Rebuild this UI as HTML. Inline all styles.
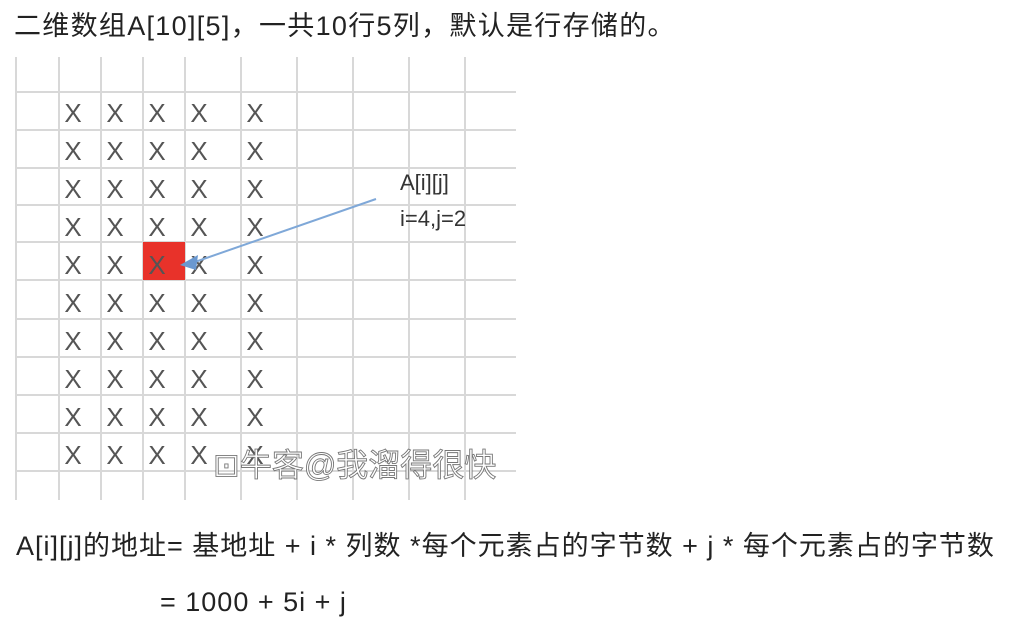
<!DOCTYPE html>
<html><head><meta charset="utf-8"><style>
body{margin:0;width:1020px;height:630px;background:#fff;overflow:hidden;position:relative;font-family:"Liberation Sans","Noto Sans CJK SC",sans-serif;color:#222}
.t{position:absolute;white-space:nowrap;font-size:27px;line-height:1}
svg{position:absolute;left:0;top:0}
</style></head><body>
<div class="t" style="left:14px;top:13px;letter-spacing:1.3px">二维数组A[10][5]，一共10行5列，默认是行存储的。</div>
<svg width="1020" height="630">
<g stroke="#d8d8d8" stroke-width="2">
<line x1="16" y1="57" x2="16" y2="500"/>
<line x1="59" y1="57" x2="59" y2="500"/>
<line x1="101" y1="57" x2="101" y2="500"/>
<line x1="143" y1="57" x2="143" y2="500"/>
<line x1="185" y1="57" x2="185" y2="500"/>
<line x1="241" y1="57" x2="241" y2="500"/>
<line x1="297" y1="57" x2="297" y2="500"/>
<line x1="353" y1="57" x2="353" y2="500"/>
<line x1="409" y1="57" x2="409" y2="500"/>
<line x1="465" y1="57" x2="465" y2="500"/>
<line x1="16" y1="92" x2="516" y2="92"/>
<line x1="16" y1="130" x2="516" y2="130"/>
<line x1="16" y1="168" x2="516" y2="168"/>
<line x1="16" y1="205" x2="516" y2="205"/>
<line x1="16" y1="242" x2="516" y2="242"/>
<line x1="16" y1="280" x2="516" y2="280"/>
<line x1="16" y1="319" x2="516" y2="319"/>
<line x1="16" y1="357" x2="516" y2="357"/>
<line x1="16" y1="395" x2="516" y2="395"/>
<line x1="16" y1="433" x2="516" y2="433"/>
<line x1="16" y1="471" x2="516" y2="471"/>
</g>
<rect x="143" y="242" width="42" height="38" fill="#e8322a"/>
<g font-family="Liberation Sans" font-size="26" fill="#555" text-anchor="middle">
<g id="r">
<text x="73" y="122">X</text><text x="115" y="122">X</text><text x="157" y="122">X</text><text x="199" y="122">X</text><text x="255" y="122">X</text>
</g>
<use href="#r" y="38"/><use href="#r" y="76"/><use href="#r" y="114"/><use href="#r" y="152"/><use href="#r" y="190"/><use href="#r" y="228"/><use href="#r" y="266"/><use href="#r" y="304"/><use href="#r" y="342"/>
</g>
<line x1="376" y1="199" x2="192" y2="263" stroke="#7fa8d8" stroke-width="2"/>
<polygon points="180,265 198,255 196,270" fill="#6a98d0"/>
<g font-family="Liberation Sans" font-size="22" fill="#333">
<text x="400" y="190">A[i][j]</text>
<text x="400" y="226">i=4,j=2</text>
</g>
<text x="213" y="476" font-family="Liberation Sans,Noto Sans CJK SC" font-size="32" fill="#fff" stroke="#777" stroke-width="0.9">⊡牛客@我溜得很快</text>
</svg>
<div class="t" style="left:16px;top:533px;letter-spacing:1px">A[i][j]的地址= 基地址 + i * 列数 *每个元素占的字节数 + j * 每个元素占的字节数</div>
<div class="t" style="left:160px;top:589px;letter-spacing:1px">= 1000 + 5i + j</div>
</body></html>
